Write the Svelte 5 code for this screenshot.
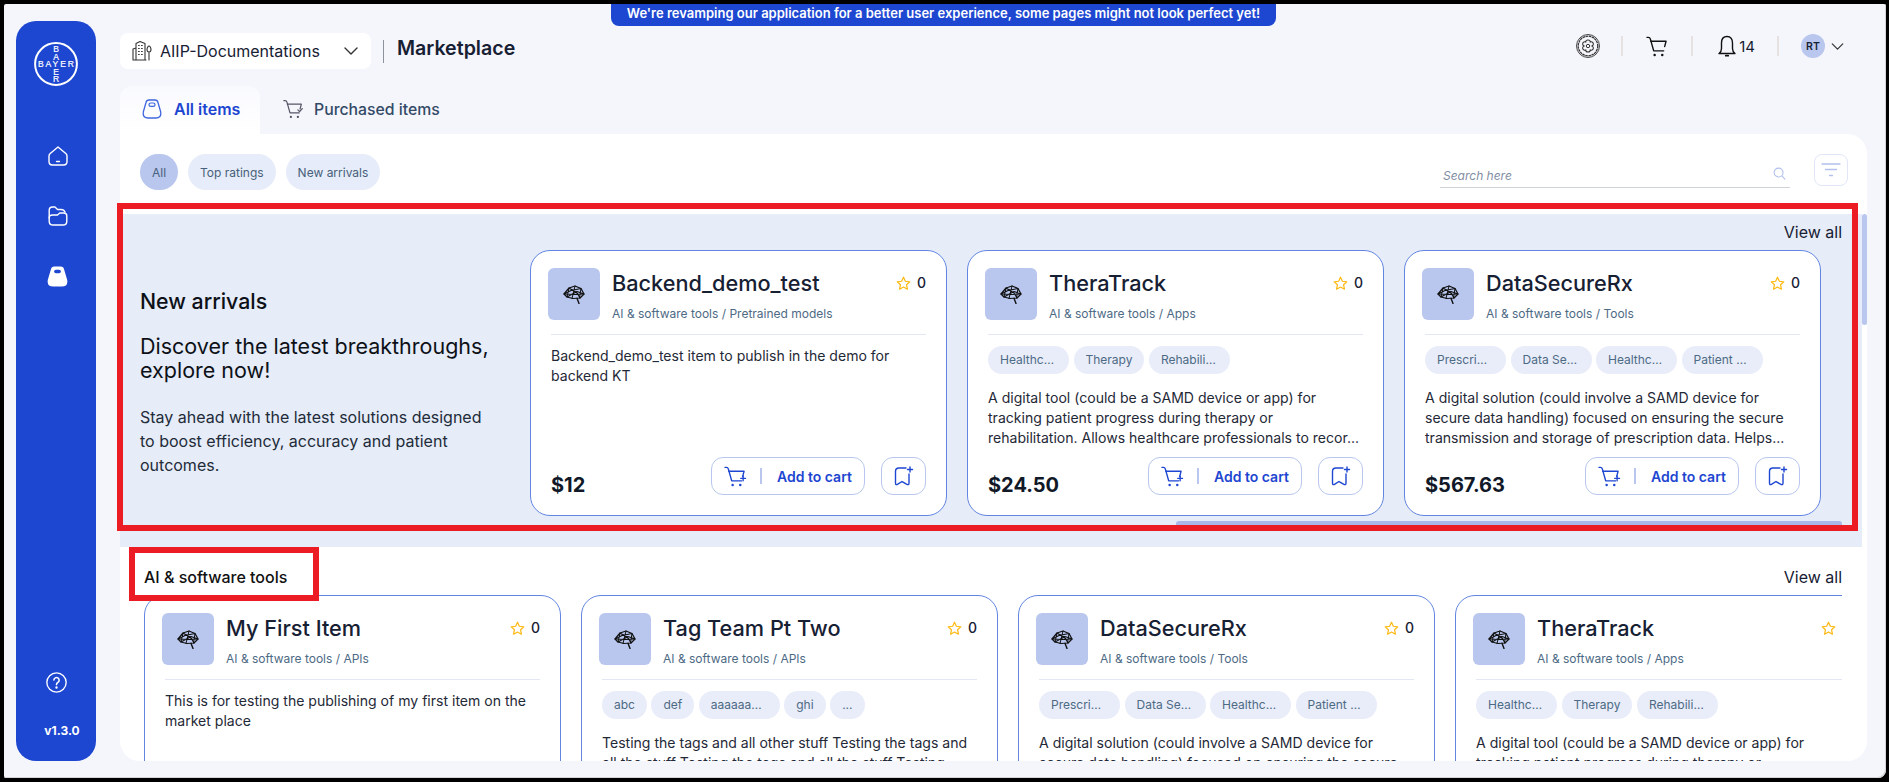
<script>
  const base = 'AI & software tools / ';
  const arrivals = [
    { title: 'Backend_demo_test', cat: 'Pretrained models', tags: [], desc: 'Backend_demo_test item to publish in the demo for backend KT', price: '$12' },
    { title: 'TheraTrack', cat: 'Apps', tags: ['Healthcare', 'Therapy', 'Rehabilitation'], desc: 'A digital tool (could be a SAMD device or app) for tracking patient progress during therapy or rehabilitation. Allows healthcare professionals to recor...', price: '$24.50' },
    { title: 'DataSecureRx', cat: 'Tools', tags: ['Prescription', 'Data Security', 'Healthcare', 'Patient Data'], desc: 'A digital solution (could involve a SAMD device for secure data handling) focused on ensuring the secure transmission and storage of prescription data. Helps...', price: '$567.63' }
  ];
  const tools = [
    { title: 'My First Item', cat: 'APIs', tags: [], desc: 'This is for testing the publishing of my first item on the market place', price: '$10' },
    { title: 'Tag Team Pt Two', cat: 'APIs', tags: ['abc', 'def', 'aaaaaaaaaaaa', 'ghi', '...'], desc: 'Testing the tags and all other stuff Testing the tags and all the stuff Testing the tags and all the stuff Testing...', price: '$20' },
    arrivals[2],
    arrivals[1]
  ];
</script>

{#snippet chevron(cls)}
  <svg class={cls} viewBox="0 0 14 8" fill="none" stroke="currentColor" stroke-width="1.4" stroke-linecap="round" stroke-linejoin="round"><path d="M1 1l6 6 6-6" /></svg>
{/snippet}

{#snippet cartIcon(cls, extra)}
  <svg class={cls} viewBox="0 0 24 22" fill="none" stroke="currentColor" stroke-width="1.4" stroke-linecap="round" stroke-linejoin="round">
    <path d="M1 1.500h1.500c1 0 1.700.6 2 1.600L8 15.500h10.500" />
    <path d="M5 5.500h16l-1.500 5.500" />
    <circle cx="9" cy="20" r=".6" fill="currentColor" />
    <circle cx="17" cy="20" r=".6" fill="currentColor" />
    {#if extra === 'plus'}<path d="M20 10.500v5M17.500 13h5" />{/if}
    {#if extra === 'check'}<path d="M17 12l2 2 3-3.500" />{/if}
  </svg>
{/snippet}

{#snippet bagIcon(cls, filled)}
  <svg class={cls} viewBox="0 0 20 20" fill="none">
    {#if filled}
      <path d="M7 .5h6q2.800 0 3.300 2.800L19.200 13q1.200 6.500-5.200 6.500H6q-6.400 0-5.200-6.500L3.700 3.300Q4.200.5 7 .5Z" fill="#fff" />
      <rect x="6.800" y="3.500" width="6.400" height="3.400" rx="1.700" fill="#1d46d1" />
    {:else}
      <path d="M7 1h6q2.500 0 3 2.500L18.700 13q1 6-5 6H6.300q-6 0-5-6L4 3.500Q4.500 1 7 1Z" stroke="currentColor" stroke-width="1.300" />
      <rect x="7" y="4" width="6" height="3.400" rx="1.700" stroke="currentColor" stroke-width="1.200" />
    {/if}
  </svg>
{/snippet}

{#snippet card(item)}
  <article class="card">
    <div class="card-head">
      <div class="thumb">
        <svg viewBox="0 0 22 19" fill="none" stroke="#111" stroke-width="1.050" stroke-linejoin="round" stroke-linecap="round">
          <path d="M1 9 6 3 12 1 18 3.500 21 9 17 13 10 13.500 4 12Z" stroke-width="1.250" />
          <path d="M6 3 4 12M12 1 9 13.500M18 3.500 16.500 13M1 9 8 5.500 18 3.500M1.500 9 10 9.500 21 9M6 3 14 8 17 13M4 12 14 6.500 21 9" />
          <path d="M14 13.300 16 18.500" stroke-width="1.400" />
        </svg>
      </div>
      <div class="names">
        <h3>{item.title}</h3>
        <p class="cat">{base}{item.cat}</p>
      </div>
      <div class="rating">
        <svg viewBox="0 0 16 16" fill="none" stroke="#fdb913" stroke-width="1.300" stroke-linejoin="round"><path d="M8 1.300l2 4.300 4.700.6-3.400 3.200.9 4.700L8 11.800l-4.200 2.300.9-4.700L1.300 6.200 6 5.600Z" /></svg>
        <span>0</span>
      </div>
    </div>
    <hr />
    {#if item.tags.length}
      <div class="tags">
        {#each item.tags as t}<span class="tag" class:long={t.length > 8}>{t}</span>{/each}
      </div>
    {/if}
    <p class="desc">{item.desc}</p>
    <div class="foot">
      <span class="price">{item.price}</span>
      <div class="actions">
        <button class="add">
          {@render cartIcon('add-ic', 'plus')}
          <i class="sep"></i>
          <span>Add to cart</span>
        </button>
        <button class="save" aria-label="Save">
          <svg viewBox="0 0 20 20" fill="none" stroke="currentColor" stroke-width="1.400" stroke-linecap="round" stroke-linejoin="round">
            <path d="M12 2H5Q1.500 2 1.500 5.500V17q0 2.500 2.300 1.200L8 15.500l.5.300 4 2.400q2.500 1.300 2.500-1.200V8" />
            <path d="M16 1v5M13.500 3.500h5" />
          </svg>
        </button>
      </div>
    </div>
  </article>
{/snippet}

<div class="page">
  <div class="frame">
    <aside class="side">
      <svg class="logo" viewBox="0 0 44 44" fill="none">
        <circle cx="22" cy="22" r="20.900" stroke="#fff" stroke-width="2" />
        <g fill="#fff" stroke="#fff" stroke-width=".2" font-family="'Liberation Sans', sans-serif" font-size="8.500" text-anchor="middle">
          <text x="22" y="9.800">B</text>
          <text x="22" y="17.800">A</text>
          <text x="22" y="25.200" textLength="36" lengthAdjust="spacing">BAYER</text>
          <text x="22" y="32.500">E</text>
          <text x="22" y="40.200">R</text>
        </g>
      </svg>
      <nav class="nav">
        <svg class="nav-ic" viewBox="0 0 20 20" fill="none" stroke="#fff" stroke-width="1.400" stroke-linecap="round" stroke-linejoin="round">
          <path d="M10 1 17.800 7.500Q19 8.500 19 10V15.500Q19 19 15.500 19H4.500Q1 19 1 15.500V10Q1 8.500 2.200 7.500Z" />
          <path d="M8.500 15.500h3" />
        </svg>
        <svg class="nav-ic" viewBox="0 0 20 20" fill="none" stroke="#fff" stroke-width="1.400" stroke-linecap="round" stroke-linejoin="round">
          <path d="M1.200 12V4.500Q1.200 1 4.500 1H7l2.500 2.500H13Q16 3.500 17 6" />
          <path d="M5 19h10q3.800 0 3.800-3.800V10q0-3-3-3h-4L9.500 9H4.500Q1.200 9 1.200 12v3.200Q1.200 19 5 19Z" />
        </svg>
        <span class="nav-bag">{@render bagIcon('bag-active', true)}</span>
      </nav>
      <svg class="help" viewBox="0 0 20 20" fill="none" stroke="#fff" stroke-width="1.300" stroke-linecap="round">
        <circle cx="10" cy="10" r="9.200" />
        <path d="M7.500 7.600A2.500 2.500 0 1 1 11.300 9.900C10.400 10.500 10 11 10 12" stroke-width="1.500" />
        <circle cx="10" cy="14.800" r=".5" fill="#fff" />
      </svg>
      <span class="version">v1.3.0</span>
    </aside>

    <main class="main">
      <header class="top">
        <div class="org">
          <svg class="org-ic" viewBox="0 0 20 22" fill="none" stroke="#333" stroke-width="1.100" stroke-linecap="round" stroke-linejoin="round">
            <path d="M1 9 4 8M4 20V3.500L8 1.500 13 3.500V20M1 20V9M1 20H14" />
            <path d="M6.500 5.500h.8M9.500 5.500h.8M6.500 8.500h.8M9.500 8.500h.8M6.500 11.500h.8M9.500 11.500h.8M6.500 14.500h.8M9.500 14.500h.8" />
            <path d="M17 20v-8M17 12c-1.500 0-2-1-2-2.500S16 6 17 6s2 2 2 3.500-.5 2.500-2 2.500Z" />
          </svg>
          <span class="org-name">AIIP-Documentations</span>
          {@render chevron('org-chev')}
        </div>
        <i class="title-sep"></i>
        <h1>Marketplace</h1>
        <div class="tools">
          <svg class="gear" viewBox="0 0 24 24" fill="none" stroke="#333">
            <circle cx="12" cy="12" r="11.500" stroke-width=".9" />
            <circle cx="12" cy="12" r="9.800" stroke-width="1.300" stroke-dasharray="2.500 .6" />
            <path d="M12 6c1.600 0 2.300 1.100 2.300 2 1.100-.5 2.700 0 3 1.300.3 1.100-.3 2.200-1.300 2.700 1 .5 1.600 1.600 1.300 2.700-.3 1.300-1.900 1.800-3 1.300 0 .9-.7 2-2.300 2s-2.300-1.100-2.300-2c-1.100.5-2.700 0-3-1.300-.3-1.100.3-2.200 1.300-2.700-1-.5-1.600-1.600-1.300-2.700.3-1.300 1.900-1.800 3-1.300 0-.9.7-2 2.300-2Z" stroke-width="1.100" />
            <circle cx="12" cy="12" r="1.700" stroke-width="1" />
          </svg>
          <i class="tool-sep"></i>
          {@render cartIcon('top-cart', '')}
          <i class="tool-sep"></i>
          <div class="bell">
            <svg viewBox="0 0 18 22" fill="none" stroke="#111" stroke-width="1.400" stroke-linejoin="round" stroke-linecap="round">
              <path d="M9 1.500C5 1.500 3.500 4.500 3.500 8v5.500C3.500 15.500 2.500 17.500 1 18.500H17C15.500 17.500 14.500 15.500 14.500 13.500V8C14.500 4.500 13 1.500 9 1.500Z" />
              <path d="M7.800 20.700h2.400" stroke-width="1.800" />
            </svg>
            <span>14</span>
          </div>
          <i class="tool-sep"></i>
          <div class="user">
            <span class="avatar">RT</span>
            {@render chevron('user-chev')}
          </div>
        </div>
      </header>

      <div class="tabs">
        <div class="tab active">{@render bagIcon('tab-bag', false)}<span>All items</span></div>
        <div class="tab">{@render cartIcon('tab-cart', 'check')}<span>Purchased items</span></div>
      </div>

      <section class="panel">
        <div class="filters">
          <div class="pills">
            <span class="pill on">All</span>
            <span class="pill">Top ratings</span>
            <span class="pill">New arrivals</span>
          </div>
          <div class="search">
            <em>Search here</em>
            <svg viewBox="0 0 14 14" fill="none" stroke="#b3c1ec" stroke-width="1.200" stroke-linecap="round"><circle cx="6" cy="6" r="4.800" /><path d="M9.600 9.600 12.800 13" /></svg>
          </div>
          <button class="filter" aria-label="Filter">
            <svg viewBox="0 0 20 16" fill="none" stroke="#b3c1ec" stroke-width="1.300" stroke-linecap="round"><path d="M1 2h18M4.500 7.500h11M8.500 13.500h3" /></svg>
          </button>
        </div>

        <div class="body">
          <div class="vthumb"></div>
          <div class="new">
            <a class="all">View all</a>
            <div class="new-row">
              <div class="intro">
                <h2>New arrivals</h2>
                <h4>Discover the latest breakthroughs, explore now!</h4>
                <p>Stay ahead with the latest solutions designed to boost efficiency, accuracy and patient outcomes.</p>
              </div>
              <div class="cards">
                {#each arrivals as item}{@render card(item)}{/each}
              </div>
            </div>
            <div class="hthumb"></div>
          </div>

          <div class="cat-sec">
            <div class="cat-head">
              <h5>AI &amp; software tools</h5>
              <a class="all">View all</a>
            </div>
            <div class="cards">
              {#each tools as item}{@render card(item)}{/each}
            </div>
          </div>
        </div>
      </section>
    </main>
  </div>

  <div class="banner">We're revamping our application for a better user experience, some pages might not look perfect yet!</div>
  <div class="mark mark-a"></div>
  <div class="mark mark-b"></div>
</div>

<style>
  :global(body) { margin: 0; background: #000; overflow: hidden; }
  :global(*) { box-sizing: border-box; }
  .page { position: relative; width: 1889px; height: 782px; padding: 4px 3px 4px 4px; background: #000; font-family: Inter, 'Noto Sans', sans-serif; color: #172033; }
  .frame { display: flex; height: 774px; padding: 17px 19px 17px 12px; gap: 24px; background: #f5f6fc; border-radius: 2px 2px 8px 2px; box-shadow: inset -1px -1px 0 #d5d5d8; }

  .side { flex: none; width: 80px; display: flex; flex-direction: column; align-items: center; background: #1d46d1; border-radius: 20px; padding-top: 21px; }
  .logo { width: 44px; height: 44px; flex: none; }
  .nav { display: flex; flex-direction: column; align-items: center; gap: 40px; margin-top: 60px; padding-left: 3px; }
  .nav-ic { width: 20px; height: 20px; display: block; }
  .nav-bag { display: block; line-height: 0; }
  .bag-active { width: 21px; height: 21px; }
  .help { width: 21px; height: 21px; margin-top: auto; }
  .version { font-size: 12px; font-weight: 700; color: #fff; margin: 30px 0 22px 12px; line-height: 16px; }

  .main { flex: 1; min-width: 0; display: flex; flex-direction: column; }
  .top { flex: none; height: 36px; margin-top: 12px; display: flex; align-items: center; }
  .org { width: 251px; height: 36px; background: #fff; border-radius: 8px; display: flex; align-items: center; padding-left: 12px; }
  .org-ic { width: 20px; height: 22px; flex: none; }
  .org-name { margin-left: 8px; font-size: 16px; color: #172033; }
  .org-chev { width: 14px; height: 8px; margin-left: auto; margin-right: 13px; color: #333; }
  .title-sep { width: 1px; height: 23px; background: #8d929c; margin: 0 13px 0 12px; }
  h1 { margin: -6px 0 0; font-size: 19.600px; font-weight: 600; line-height: 24px; color: #172033; }
  .tools { margin-left: auto; display: flex; align-items: center; height: 36px; margin-top: -10px; }
  .gear { width: 24px; height: 24px; }
  .tool-sep { width: 2px; height: 20px; background: #e6e2e0; }
  .gear + .tool-sep { margin-left: 21px; }
  .top-cart { width: 23px; height: 21px; margin: 0 22px 0 23px; color: #111; }
  .bell { display: flex; align-items: center; margin: 0 22px 0 25px; font-size: 16px; }
  .bell svg { width: 18px; height: 22px; margin-right: 3px; }
  .bell span { font-size: 15px; color: #172033; }
  .user { display: flex; align-items: center; margin: 0 23px 0 22px; }
  .avatar { width: 24px; height: 24px; border-radius: 50%; background: #b9c7ee; font-size: 10.500px; font-weight: 600; display: flex; align-items: center; justify-content: center; color: #172033; }
  .user-chev { width: 13px; height: 7px; margin-left: 6px; color: #333; }

  .tabs { flex: none; height: 48px; margin-top: 17px; display: flex; }
  .tab { display: flex; align-items: center; font-size: 15.800px; font-weight: 500; color: #334a66; padding: 0 22px 2px 23px; }
  .tab.active { width: 140px; background: linear-gradient(#f9fafe, #fff); border-radius: 12px 12px 0 0; color: #1d46d1; font-weight: 600; font-size: 16px; padding-right: 0; padding-left: 22px; }
  .tab-bag { width: 20px; height: 20px; color: #3f66e0; margin-right: 12px; }
  .tab-cart { width: 21px; height: 20px; color: #556; margin-right: 10px; }

  .panel { flex: 1; min-height: 0; position: relative; background: #fff; border-radius: 0 20px 20px 20px; overflow: hidden; }
  .filters { height: 80px; padding: 20px 19px 0 20px; display: flex; align-items: flex-start; }
  .pills { display: flex; gap: 10px; }
  .pill { height: 36px; border-radius: 18px; padding: 0 12px; display: flex; align-items: center; font-size: 12px; color: #475f7a; background: #e6ecf9; }
  .pill.on { width: 38px; background: #b9c7ee; justify-content: center; padding: 0; }
  .search { position: relative; margin-left: auto; width: 350px; height: 34px; border-bottom: 1.500px solid #cfd2d8; display: flex; align-items: center; padding: 10px 4px 0 3px; }
  .search em { font-size: 12px; color: #7f8ea3; }
  .search svg { width: 13px; height: 13px; margin-left: auto; margin-bottom: 4px; }
  .filter { width: 34px; height: 32px; margin-left: 24px; border: 1px solid #e0e6f7; border-radius: 8px; background: #fff; padding: 0; display: flex; align-items: center; justify-content: center; }
  .filter svg { width: 20px; height: 16px; }

  .body { position: relative; padding-right: 5px; }
  .vthumb { position: absolute; right: 0; top: 0; width: 5px; height: 111px; background: #b9c7ee; border-radius: 3px; }
  .new { position: relative; height: 333px; background: #e6ecf8; padding: 10px 20px 0 20px; }
  .all { display: block; text-align: right; font-size: 16px; font-weight: 400; line-height: 17px; color: #172033; }
  .new-row { display: flex; margin-top: 9px; }
  .intro { flex: none; width: 390px; align-self: center; padding-right: 38px; color: #111; }
  .intro h2 { margin: 0 0 21px; font-size: 21.300px; line-height: 24px; font-weight: 500; color: #0d1117; }
  .intro h4 { margin: 0 0 23px; font-size: 21.500px; line-height: 24px; font-weight: 400; color: #0d1117; }
  .intro p { margin: 0; font-size: 16px; line-height: 24px; color: #222b38; }
  .cards { display: flex; gap: 20px; overflow: hidden; flex: 1; min-width: 0; }
  .hthumb { position: absolute; left: 1056px; right: 20px; top: 307px; height: 6px; background: #a9b8e9; border-radius: 3px 3px 0 0; }

  .cat-sec { padding: 20px 20px 0 24px; }
  .cat-head { display: flex; align-items: center; justify-content: space-between; height: 20px; margin-bottom: 8px; }
  h5 { margin: 0; font-size: 16px; font-weight: 500; color: #111; }

  .card { flex: none; width: 417px; height: 266px; background: #fff; border: 1px solid #6285e2; border-radius: 20px; padding: 17px 20px 20px; display: flex; flex-direction: column; }
  .card-head { display: flex; align-items: flex-start; height: 52px; margin-left: -3px; }
  .thumb { flex: none; width: 52px; height: 52px; border-radius: 6px; background: #b9c7ee; display: flex; align-items: center; justify-content: center; margin-right: 12px; }
  .thumb svg { width: 22px; height: 19px; }
  .names { flex: 1; min-width: 0; }
  h3 { margin: 0; font-size: 21.700px; line-height: 30px; font-weight: 450; color: #172033; }
  .cat { margin: 7px 0 0; font-size: 12px; line-height: 18px; color: #4d6a85; }
  .rating { display: flex; align-items: center; gap: 6px; margin-top: 7px; font-size: 14px; font-weight: 500; line-height: 16px; color: #172033; }
  .rating svg { width: 15px; height: 15px; }
  hr { width: 100%; flex: none; height: 1px; border: 0; background: #e2e7f3; margin: 14px 0 11px; }
  .tags { display: flex; gap: 4.500px; margin-bottom: 14px; }
  .tag { flex: none; max-width: 81px; height: 28px; line-height: 28px; padding: 0 12px; border-radius: 14px; background: #e9edf9; font-size: 12px; color: #4d6a85; white-space: nowrap; overflow: hidden; text-overflow: ellipsis; }
  .tag.long { width: 81px; padding-right: 13px; }
  .desc { margin: 0; font-size: 14.050px; line-height: 20px; color: #1f2937; }
  .foot { margin-top: auto; display: flex; align-items: flex-end; justify-content: space-between; }
  .price { font-size: 20px; font-weight: 700; line-height: 24px; color: #111827; margin-bottom: -2px; }
  .actions { display: flex; gap: 16px; }
  .add { width: 154px; height: 38px; background: #fff; border: 1px solid #b9c7ee; border-radius: 12px; display: flex; align-items: center; padding: 0 0 0 12px; font: inherit; color: #1d46d1; }
  .add-ic { width: 23px; height: 21px; color: #1d46d1; }
  .sep { width: 2px; height: 16px; background: #b9c7ee; margin: 0 15px 0 13px; }
  .add span { font-size: 14px; font-weight: 600; }
  .save { width: 45px; height: 38px; background: #fff; border: 1px solid #b9c7ee; border-radius: 12px; padding: 0; display: flex; align-items: center; justify-content: center; color: #1d46d1; }
  .save svg { width: 20px; height: 20px; }

  .banner { position: absolute; left: 611px; top: 4px; width: 665px; height: 22px; background: #1d46d1; border-radius: 0 0 8px 8px; color: #fff; font-size: 13px; font-weight: 600; text-align: center; line-height: 19px; white-space: nowrap; }
  .mark { position: absolute; border: 6px solid #ec1c24; pointer-events: none; }
  .mark-a { left: 117px; top: 203px; width: 1741px; height: 328px; }
  .mark-b { left: 129px; top: 547px; width: 190px; height: 54px; }
</style>
